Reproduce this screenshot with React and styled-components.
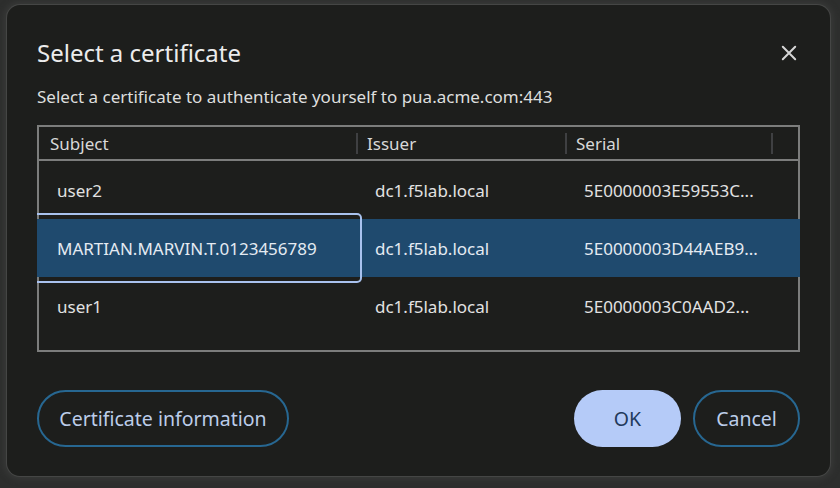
import React from 'react';
import styled, { createGlobalStyle } from 'styled-components';

const GlobalStyle = createGlobalStyle`
  html, body {
    margin: 0;
    padding: 0;
    background: #2d2e2d;
  }
  body {
    font-family: "Noto Sans", "Open Sans", sans-serif;
    -webkit-font-smoothing: antialiased;
  }
`;

const certs = [
  { subject: 'user2', issuer: 'dc1.f5lab.local', serial: '5E0000003E59553C...' },
  { subject: 'MARTIAN.MARVIN.T.0123456789', issuer: 'dc1.f5lab.local', serial: '5E0000003D44AEB9...', selected: true },
  { subject: 'user1', issuer: 'dc1.f5lab.local', serial: '5E0000003C0AAD2...' },
];

const App = () => {
  return (
    <>
      <GlobalStyle />
      <Page>
        <Dialog>
          <Header>
            <Title>Select a certificate</Title>
            <CloseButton aria-label="Close">
              <svg width="16" height="16" viewBox="0 0 16 16">
                <path d="M1.8 1.8 L14.2 14.2 M14.2 1.8 L1.8 14.2" stroke="#d6d6d6" strokeWidth="2" strokeLinecap="round" />
              </svg>
            </CloseButton>
          </Header>
          <Subtitle>Select a certificate to authenticate yourself to pua.acme.com:443</Subtitle>

          <TableFrame>
            <HeadRow>
              <HeadCell>Subject</HeadCell>
              <HeadCell>Issuer</HeadCell>
              <HeadCell>Serial</HeadCell>
              <HeadCell />
            </HeadRow>
            <div>
              {certs.map((c) => (
                <Row key={c.serial} $selected={c.selected}>
                  <Cell $first>
                    {c.subject}
                    {c.selected && <FocusRing />}
                  </Cell>
                  <Cell>{c.issuer}</Cell>
                  <Cell>{c.serial}</Cell>
                  <Cell />
                </Row>
              ))}
            </div>
          </TableFrame>

          <Footer>
            <OutlineButton>Certificate information</OutlineButton>
            <Actions>
              <PrimaryButton>OK</PrimaryButton>
              <OutlineButton $small>Cancel</OutlineButton>
            </Actions>
          </Footer>
        </Dialog>
      </Page>
    </>
  );
};

export default App;

const Page = styled.div`
  width: 840px;
  height: 488px;
  padding: 5px 0 0 7px;
  box-sizing: border-box;
  overflow: hidden;
`;

const Dialog = styled.div`
  width: 823px;
  height: 471px;
  box-sizing: border-box;
  background: #1d1e1c;
  border-radius: 13px;
  box-shadow: 0 0 0 1px #454645, 0 0 6px 3px #393a39;
  padding: 0 30px;
  display: flex;
  flex-direction: column;
`;

const Header = styled.div`
  display: flex;
  align-items: center;
  justify-content: space-between;
  height: 28px;
  margin-top: 34px;
`;

const Title = styled.h1`
  margin: 0;
  font-size: 24px;
  font-weight: 400;
  color: #ececec;
  line-height: 28px;
`;

const CloseButton = styled.div`
  width: 16px;
  height: 16px;
  margin-right: 3px;
  display: flex;
`;

const Subtitle = styled.p`
  margin: 20px 0 0;
  font-size: 17px;
  line-height: 20px;
  color: #dedede;
`;

const TableFrame = styled.div`
  margin-top: 18px;
  height: 227px;
  box-sizing: border-box;
  border: 2px solid #7c7d7c;
  display: flex;
  flex-direction: column;
`;

const columns = `317px 209px 206px 1fr`;

const HeadRow = styled.div`
  display: grid;
  grid-template-columns: ${columns};
  height: 32px;
  border-bottom: 2px solid #7c7d7c;
`;

const HeadCell = styled.div`
  display: flex;
  align-items: center;
  padding-left: 11px;
  font-size: 17px;
  color: #d8d8d8;
  position: relative;

  & + &::before {
    content: '';
    position: absolute;
    left: 0;
    top: 6px;
    bottom: 5px;
    width: 2px;
    background: #3f4042;
  }
`;

const Row = styled.div`
  display: grid;
  grid-template-columns: ${columns};
  height: 58px;
  background: ${(p) => (p.$selected ? '#1f4a6e' : 'transparent')};
  box-shadow: ${(p) => (p.$selected ? '-2px 0 0 #1f4a6e, 2px 0 0 #1f4a6e' : 'none')};
  color: ${(p) => (p.$selected ? '#e4eaf2' : '#e2e2e2')};
`;

const Cell = styled.div`
  position: relative;
  display: flex;
  align-items: center;
  padding-left: ${(p) => (p.$first ? '18px' : '19px')};
  font-size: 17px;
  white-space: nowrap;
`;

const FocusRing = styled.span`
  position: absolute;
  top: -6px;
  bottom: -6px;
  left: -2px;
  right: -6px;
  border: 2px solid #a9c2ee;
  border-left: none;
  border-radius: 0 5px 5px 0;
  pointer-events: none;
`;

const Footer = styled.div`
  margin-top: 38px;
  display: flex;
  justify-content: space-between;
  align-items: center;
`;

const Actions = styled.div`
  display: flex;
  gap: 12px;
`;

const buttonBase = `
  box-sizing: border-box;
  height: 57px;
  border-radius: 29px;
  font-family: "Noto Sans", "Open Sans", sans-serif;
  font-size: 19.5px;
  display: flex;
  align-items: center;
  justify-content: center;
  cursor: pointer;
`;

const OutlineButton = styled.button`
  ${buttonBase}
  width: ${(p) => (p.$small ? '107px' : '252px')};
  background: transparent;
  border: 2px solid #276791;
  color: #bccde9;
`;

const PrimaryButton = styled.button`
  ${buttonBase}
  width: 107px;
  background: #b5cbf8;
  border: none;
  color: #22395c;
`;
